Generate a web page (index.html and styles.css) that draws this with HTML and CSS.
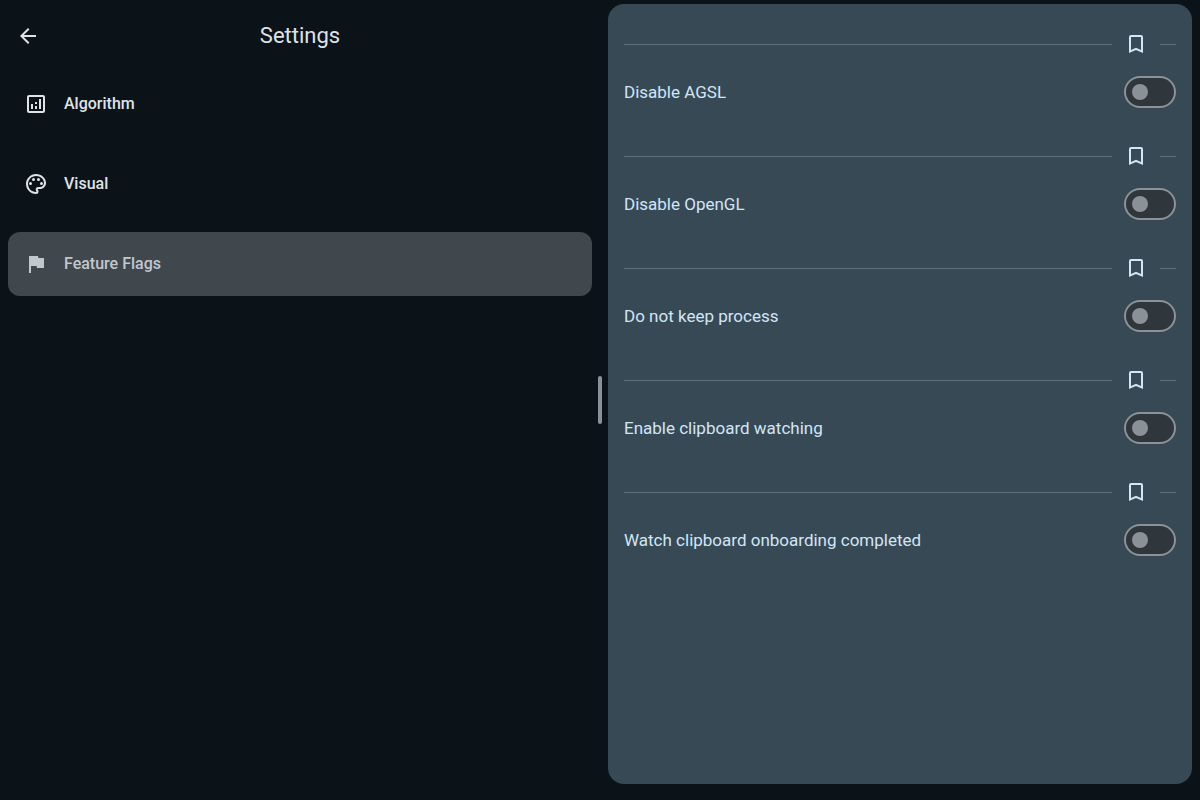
FILE: index.html
```html
<!DOCTYPE html>
<html lang="en">
<head>
<meta charset="utf-8">
<meta name="viewport" content="width=device-width, initial-scale=1">
<title>Settings</title>
<link rel="stylesheet" href="styles.css">
</head>
<body>
<svg width="0" height="0" class="sprite" aria-hidden="true">
  <symbol id="bookmark" viewBox="0 0 24 24"><path d="M17 3H7c-1.1 0-2 .9-2 2v16l7-3 7 3V5c0-1.100-.9-2-2-2zm0 15l-5-2.180L7 18V5h10v13z"/></symbol>
</svg>
<div class="app">
  <section class="pane">
    <header class="topbar">
      <button class="icon-button" type="button" aria-label="Back">
        <svg class="icon" viewBox="0 0 24 24"><path d="M20 11H7.830l5.590-5.590L12 4l-8 8 8 8 1.410-1.410L7.830 13H20v-2z"/></svg>
      </button>
      <h1 class="title">Settings</h1>
    </header>
    <nav class="menu">
      <a class="menu-item" href="#algorithm">
        <svg class="icon" viewBox="0 0 24 24"><path d="M19 3H5c-1.100 0-2 .9-2 2v14c0 1.100.9 2 2 2h14c1.100 0 2-.9 2-2V5c0-1.100-.9-2-2-2zm0 16H5V5h14v14z"/><path d="M7 12h2v5H7zM15 7h2v10h-2zM11 14h2v3h-2zM11 10h2v2h-2z"/></svg>
        <span>Algorithm</span>
      </a>
      <a class="menu-item" href="#visual">
        <svg class="icon" viewBox="0 0 24 24"><path d="M12 22C6.490 22 2 17.510 2 12S6.490 2 12 2s10 4.040 10 9c0 3.310-2.690 6-6 6h-1.770c-.28 0-.5.22-.5.5 0 .12.050.23.130.33.410.47.640 1.060.640 1.670A2.500 2.500 0 0 1 12 22zm0-18c-4.410 0-8 3.590-8 8s3.590 8 8 8c.28 0 .5-.22.5-.5a.54.54 0 0 0-.14-.35c-.41-.46-.63-1.050-.63-1.650a2.500 2.500 0 0 1 2.500-2.500H16c2.210 0 4-1.790 4-4 0-3.860-3.590-7-8-7z"/><circle cx="6.500" cy="11.500" r="1.500"/><circle cx="9.500" cy="7.500" r="1.500"/><circle cx="14.500" cy="7.500" r="1.500"/><circle cx="17.500" cy="11.500" r="1.500"/></svg>
        <span>Visual</span>
      </a>
      <a class="menu-item selected" href="#flags" aria-current="page">
        <svg class="icon" viewBox="0 0 24 24"><path d="M14.400 6L14 4H5v17h2v-7h5.600l.4 2h7V6z"/></svg>
        <span>Feature Flags</span>
      </a>
    </nav>
  </section>
  <div class="handle" role="separator" aria-orientation="vertical"></div>
  <main class="detail">
    <section class="flag">
      <div class="divider"><button class="bookmark" type="button" aria-label="Bookmark Disable AGSL"><svg class="icon"><use href="#bookmark"/></svg></button></div>
      <label class="flag-row">Disable AGSL<input class="switch" type="checkbox" role="switch"></label>
    </section>
    <section class="flag">
      <div class="divider"><button class="bookmark" type="button" aria-label="Bookmark Disable OpenGL"><svg class="icon"><use href="#bookmark"/></svg></button></div>
      <label class="flag-row">Disable OpenGL<input class="switch" type="checkbox" role="switch"></label>
    </section>
    <section class="flag">
      <div class="divider"><button class="bookmark" type="button" aria-label="Bookmark Do not keep process"><svg class="icon"><use href="#bookmark"/></svg></button></div>
      <label class="flag-row">Do not keep process<input class="switch" type="checkbox" role="switch"></label>
    </section>
    <section class="flag">
      <div class="divider"><button class="bookmark" type="button" aria-label="Bookmark Enable clipboard watching"><svg class="icon"><use href="#bookmark"/></svg></button></div>
      <label class="flag-row">Enable clipboard watching<input class="switch" type="checkbox" role="switch"></label>
    </section>
    <section class="flag">
      <div class="divider"><button class="bookmark" type="button" aria-label="Bookmark Watch clipboard onboarding completed"><svg class="icon"><use href="#bookmark"/></svg></button></div>
      <label class="flag-row">Watch clipboard onboarding completed<input class="switch" type="checkbox" role="switch"></label>
    </section>
  </main>
</div>
</body>
</html>
```
FILE: styles.css
```css
* {
  box-sizing: border-box;
}

body {
  margin: 0;
  background: #0b1319;
  color: #dee3e9;
  font-family: Roboto, sans-serif;
  font-size: 16px;
  line-height: 24px;
}

button {
  padding: 0;
  border: 0;
  background: none;
  color: inherit;
  cursor: pointer;
}

.sprite {
  position: absolute;
}

.icon {
  display: block;
  flex: none;
  width: 24px;
  height: 24px;
  fill: currentColor;
}

.app {
  display: grid;
  grid-template-columns: 1fr 4px 1fr;
  gap: 6px;
  min-height: 100vh;
  padding: 4px 8px 16px;
}

.topbar {
  display: grid;
  grid-template-columns: 40px 1fr 40px;
  align-items: center;
  height: 64px;
}

.icon-button {
  display: grid;
  place-items: center;
  width: 40px;
  height: 40px;
}

.title {
  margin: 0;
  font-size: 22px;
  font-weight: 400;
  line-height: 28px;
  text-align: center;
}

.menu {
  display: flex;
  flex-direction: column;
  gap: 16px;
  padding-top: 4px;
}

.menu-item {
  display: flex;
  align-items: center;
  gap: 16px;
  min-height: 64px;
  padding: 0 16px;
  border-radius: 12px;
  color: inherit;
  font-weight: 500;
  text-decoration: none;
}

.menu-item.selected {
  background: #41484d;
  color: #c1c7ce;
}

.handle {
  align-self: center;
  height: 48px;
  margin-top: 12px;
  border-radius: 2px;
  background: #8b9198;
}

.detail {
  padding: 16px;
  border-radius: 16px;
  background: #374955;
  color: #d2e5f5;
}

.flag {
  padding-bottom: 16px;
}

.divider {
  display: flex;
  align-items: center;
}

.divider::before,
.divider::after {
  content: "";
  height: 1px;
  background: #5f6e79;
}

.divider::before {
  flex: 1;
}

.divider::after {
  width: 16px;
}

.bookmark {
  display: grid;
  place-items: center;
  width: 48px;
  height: 48px;
}

.flag-row {
  display: flex;
  align-items: center;
  justify-content: space-between;
  gap: 16px;
  min-height: 48px;
  font-size: 17px;
}

.switch {
  appearance: none;
  display: flex;
  flex: none;
  align-items: center;
  width: 52px;
  height: 32px;
  margin: 0;
  padding: 0 6px;
  border: 2px solid #8b9198;
  border-radius: 16px;
  background: #2f363c;
  cursor: pointer;
}

.switch::before {
  content: "";
  width: 16px;
  height: 16px;
  border-radius: 50%;
  background: #8b9198;
}

.switch:checked {
  justify-content: flex-end;
}
```
